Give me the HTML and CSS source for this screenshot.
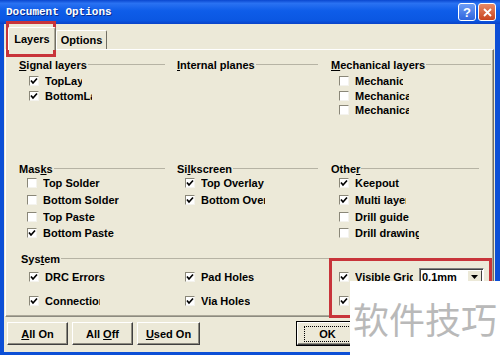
FILE: index.html
```html
<!DOCTYPE html>
<html lang="en">

<head>
    <meta charset="UTF-8">
    <meta name="viewport" content="width=device-width, initial-scale=1.0">
    <title>Document Options</title>
    <link rel="stylesheet" href="styles.css">
</head>

<body>
    <div class="window">
        <div class="titlebar">
            <span class="title">Document Options</span>
            <div class="caption-buttons">
                <span class="cbtn help">?</span>
                <span class="cbtn close">
                    <svg width="9" height="9" viewBox="0 0 9 9"><path d="M1 1 L8 8 M8 1 L1 8" stroke="#fff" stroke-width="1.8" /></svg>
                </span>
            </div>
        </div>

        <div class="client">
            <div class="tabs">
                <div class="tab active">Layers</div>
                <div class="tab">Options</div>
            </div>

            <div class="panel">
                <div class="groups">
                    <div class="group first">
                        <div class="group-label"><span><u>S</u>ignal layers</span></div>
                        <div class="check indent"><span class="box on"><svg width="8" height="8" viewBox="0 0 8 8"><path d="M1 3.5 L3 6 L7 1.5" /></svg></span><span class="text w37">TopLayer</span></div>
                        <div class="check indent"><span class="box on"><svg width="8" height="8" viewBox="0 0 8 8"><path d="M1 3.5 L3 6 L7 1.5" /></svg></span><span class="text w47">BottomLayer</span></div>
                    </div>

                    <div class="group first mid">
                        <div class="group-label"><span><u>I</u>nternal planes</span></div>
                    </div>

                    <div class="group first last">
                        <div class="group-label"><span><u>M</u>echanical layers</span></div>
                        <div class="check"><span class="box"></span><span class="text w48">Mechanical 1</span></div>
                        <div class="check"><span class="box"></span><span class="text w54">Mechanical 2</span></div>
                        <div class="check"><span class="box"></span><span class="text w54">Mechanical 3</span></div>
                    </div>

                    <div class="group tall">
                        <div class="group-label"><span>Mas<u>k</u>s</span></div>
                        <div class="check"><span class="box"></span><span class="text">Top Solder</span></div>
                        <div class="check"><span class="box"></span><span class="text">Bottom Solder</span></div>
                        <div class="check"><span class="box"></span><span class="text">Top Paste</span></div>
                        <div class="check"><span class="box on"><svg width="8" height="8" viewBox="0 0 8 8"><path d="M1 3.5 L3 6 L7 1.5" /></svg></span><span class="text">Bottom Paste</span></div>
                    </div>

                    <div class="group tall mid">
                        <div class="group-label"><span>Si<u>l</u>kscreen</span></div>
                        <div class="check"><span class="box on"><svg width="8" height="8" viewBox="0 0 8 8"><path d="M1 3.5 L3 6 L7 1.5" /></svg></span><span class="text w66">Top Overlay</span></div>
                        <div class="check"><span class="box on"><svg width="8" height="8" viewBox="0 0 8 8"><path d="M1 3.5 L3 6 L7 1.5" /></svg></span><span class="text w64">Bottom Overlay</span></div>
                    </div>

                    <div class="group tall short">
                        <div class="group-label"><span>Othe<u>r</u></span></div>
                        <div class="check"><span class="box on"><svg width="8" height="8" viewBox="0 0 8 8"><path d="M1 3.5 L3 6 L7 1.5" /></svg></span><span class="text w66">Keepout</span></div>
                        <div class="check"><span class="box on"><svg width="8" height="8" viewBox="0 0 8 8"><path d="M1 3.5 L3 6 L7 1.5" /></svg></span><span class="text w51">Multi layer</span></div>
                        <div class="check"><span class="box"></span><span class="text w66">Drill guide</span></div>
                        <div class="check"><span class="box"></span><span class="text w64">Drill drawing</span></div>
                    </div>
                </div>

                <div class="system">
                    <div class="group-label"><span>Sys<u>t</u>em</span></div>
                    <div class="system-grid">
                        <div class="check"><span class="box on"><svg width="8" height="8" viewBox="0 0 8 8"><path d="M1 3.5 L3 6 L7 1.5" /></svg></span><span class="text">DRC Errors</span></div>
                        <div class="check"><span class="box on"><svg width="8" height="8" viewBox="0 0 8 8"><path d="M1 3.5 L3 6 L7 1.5" /></svg></span><span class="text">Pad Holes</span></div>
                        <div class="check">
                            <span class="box on"><svg width="8" height="8" viewBox="0 0 8 8"><path d="M1 3.5 L3 6 L7 1.5" /></svg></span><span class="text w58">Visible Grid 1</span>
                            <div class="combo"><span class="combo-value">0.1mm</span><span class="combo-btn"><svg width="7" height="4" viewBox="0 0 7 4"><path d="M0 0 H7 L3.5 4 Z" fill="#000" /></svg></span></div>
                        </div>
                        <div class="check"><span class="box on"><svg width="8" height="8" viewBox="0 0 8 8"><path d="M1 3.5 L3 6 L7 1.5" /></svg></span><span class="text w55">Connections</span></div>
                        <div class="check"><span class="box on"><svg width="8" height="8" viewBox="0 0 8 8"><path d="M1 3.5 L3 6 L7 1.5" /></svg></span><span class="text">Via Holes</span></div>
                        <div class="check">
                            <span class="box on"><svg width="8" height="8" viewBox="0 0 8 8"><path d="M1 3.5 L3 6 L7 1.5" /></svg></span>
                        </div>
                    </div>
                </div>
            </div>

            <div class="buttons">
                <div class="btn"><span><u>A</u>ll On</span></div>
                <div class="btn"><span>All <u>O</u>ff</span></div>
                <div class="btn wide"><span><u>U</u>sed On</span></div>
                <div class="btn ok"><span class="focus">OK</span></div>
            </div>
        </div>

        <!-- annotations drawn over the dialog -->
        <div class="mark mark-tab"></div>
        <div class="mark mark-grid"></div>
        <div class="watermark">软件技巧</div>
    </div>
</body>

</html>
```

FILE: styles.css
```css
body {
    margin: 0;
    font-family: "Liberation Sans", Arial, sans-serif;
    font-size: 11px;
    font-weight: bold;
    color: #000;
}

.window {
    position: relative;
    width: 500px;
    height: 355px;
    background: #0c4fd6;
    overflow: hidden;
}

/* title bar */
.titlebar {
    height: 24px;
    box-sizing: border-box;
    padding: 0 4px 0 6px;
    display: flex;
    align-items: center;
    justify-content: space-between;
    background: linear-gradient(to bottom, #0a47cf 0%, #2a72f2 14%, #0e5de9 45%, #0b57e2 85%, #0a43c8 100%);
}

.title {
    font-family: "Liberation Mono", monospace;
    font-size: 11px;
    color: #fff;
    text-shadow: 1px 1px 0 #0a2c8c;
}

.caption-buttons {
    display: flex;
    gap: 2px;
}

.cbtn {
    width: 18px;
    height: 18px;
    box-sizing: border-box;
    border: 1px solid #fff;
    border-radius: 3px;
    display: flex;
    align-items: center;
    justify-content: center;
    color: #fff;
}

.help {
    background: linear-gradient(#6c9cf6, #2f64dd);
    font-size: 13px;
}

.close {
    background: linear-gradient(#ea8a66, #c8441f);
}

/* dialog area */
.client {
    margin: 0 5px 0 4px;
    height: 328px;
    background: #ece9d8;
}

.tabs {
    height: 25px;
    padding-left: 4px;
    display: flex;
    align-items: flex-end;
}

.tab {
    width: 51px;
    height: 19px;
    box-sizing: border-box;
    display: flex;
    align-items: center;
    justify-content: center;
    border-top: 1px solid #fff;
    border-left: 1px solid #fff;
    border-right: 1px solid #716f64;
    border-radius: 2px 2px 0 0;
}

.tab.active {
    width: 48px;
    height: 23px;
    margin-bottom: -1px;
    position: relative;
    z-index: 1;
    background: #ece9d8;
    box-shadow: inset -1px 0 0 #aca899;
}

.panel {
    margin: 0 1px;
    height: 268px;
    box-sizing: border-box;
    padding: 8px 0 0 13px;
    border: 1px solid;
    border-color: #fff #716f64 #8d8b80 #fff;
    box-shadow: inset -1px -1px 0 #aca899;
}

.groups {
    display: grid;
    grid-template-columns: 158px 154px 1fr;
    grid-template-rows: 104px 90px;
}

.group-label {
    height: 13px;
    display: flex;
    align-items: center;
    margin-right: 12px;
}

.group-label::after {
    content: "";
    flex: 1;
    height: 1px;
    margin-left: 1px;
    background: #b6b3a4;
}

.group.first .group-label {
    margin-bottom: 3px;
}

.group.mid .group-label {
    margin-right: 13px;
}

.group.last .group-label {
    margin-right: 2px;
}

.group.short .group-label {
    margin-right: 14px;
}

.check {
    height: 14.5px;
    padding-left: 8px;
    display: flex;
    align-items: center;
}

.check.indent {
    padding-left: 10px;
}

.group.tall .check {
    height: 16.7px;
}

.box {
    width: 10px;
    height: 10px;
    box-sizing: border-box;
    margin-right: 6px;
    flex-shrink: 0;
    display: flex;
    align-items: center;
    justify-content: center;
    background: #fff;
    border: 1px solid;
    border-color: #8a8778 #f4f3ee #f4f3ee #8a8778;
}

.box svg path {
    fill: none;
    stroke: #000;
    stroke-width: 1.7;
}

.text {
    white-space: nowrap;
    overflow: hidden;
}

.w37 { width: 37px; }
.w47 { width: 47px; }
.w48 { width: 48px; }
.w51 { width: 51px; }
.w54 { width: 54px; }
.w55 { width: 55px; }
.w58 { width: 58px; }
.w64 { width: 64px; }
.w66 { width: 66px; }

.system {
    padding-left: 2px;
}

.system .group-label {
    margin-right: 2px;
}

.system-grid {
    display: grid;
    grid-template-columns: 156px 154px 1fr;
    grid-auto-rows: 24px;
}

.system-grid .check {
    height: 24px;
}

.combo {
    margin-left: 6px;
    width: 65px;
    height: 19px;
    box-sizing: border-box;
    display: flex;
    align-items: center;
    justify-content: space-between;
    background: #fff;
    border: 1px solid;
    border-color: #808080 #fff #fff #808080;
    box-shadow: inset 1px 1px 0 #404040;
}

.combo-value {
    padding-left: 2px;
}

.combo-btn {
    width: 15px;
    height: 15px;
    margin-right: 1px;
    box-sizing: border-box;
    display: flex;
    align-items: center;
    justify-content: center;
    background: #ece9d8;
    border: 1px solid;
    border-color: #fff #404040 #404040 #fff;
}

/* bottom buttons */
.buttons {
    display: flex;
    gap: 4px;
    padding: 5px 0 0 3px;
}

.btn {
    width: 61px;
    height: 23px;
    flex-shrink: 0;
    box-sizing: border-box;
    display: flex;
    align-items: center;
    justify-content: center;
    background: #ece9d8;
    border: 1px solid;
    border-color: #fff #404040 #404040 #fff;
    box-shadow: inset -1px -1px 0 #8d8b80;
}

.btn.wide {
    width: 63px;
}

.btn.ok {
    margin-left: 93px;
    outline: 1px solid #000;
    outline-offset: 0;
}

.focus {
    padding: 1px 14px;
    border: 1px dotted #000;
}

/* annotations */
.mark {
    position: absolute;
    box-sizing: border-box;
    border: 3px solid #c8343a;
}

.mark-tab {
    left: 6px;
    top: 21px;
    width: 50px;
    height: 36px;
}

.mark-grid {
    left: 329px;
    top: 258px;
    width: 163px;
    height: 60px;
}

.watermark {
    position: absolute;
    left: 350px;
    top: 281px;
    width: 150px;
    height: 74px;
    display: flex;
    align-items: center;
    justify-content: center;
    background: #fff;
    color: #b9b9b9;
    font-family: "Noto Sans CJK SC", sans-serif;
    font-weight: normal;
    font-size: 36px;
}
```
